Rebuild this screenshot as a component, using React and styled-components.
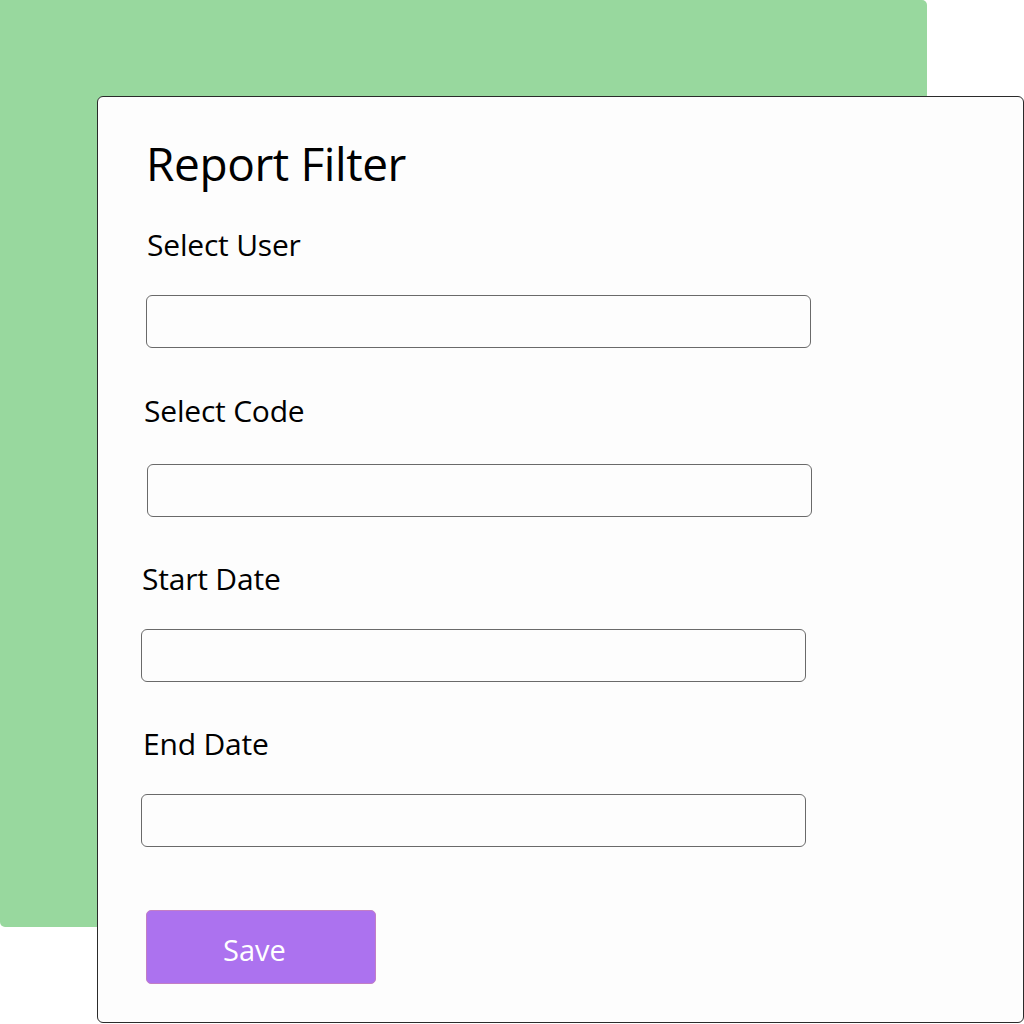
import React from "react";
import styled, { createGlobalStyle } from "styled-components";

const Global = createGlobalStyle`
  html, body { margin: 0; padding: 0; background: #ffffff; }
  body { font-family: "Open Sans", "Noto Sans", sans-serif; }
`;

const Stage = styled.div`
  width: 1024px;
  height: 1024px;
  display: grid;
  grid-template-columns: 1024px;
  grid-template-rows: 1024px;
  overflow: hidden;
`;

const Backdrop = styled.div`
  grid-area: 1 / 1;
  width: 927px;
  height: 927px;
  background: #98d89e;
  border-radius: 0 5px 5px 5px;
`;

const Card = styled.section`
  grid-area: 1 / 1;
  margin: 96px 0 0 97px;
  width: 927px;
  height: 927px;
  box-sizing: border-box;
  background: #fdfdfd;
  border: 1.5px solid #2a2a2a;
  border-radius: 6px;
  padding: 42px 0 0 0;
  display: flex;
  flex-direction: column;
  align-items: flex-start;
`;

const Title = styled.h1`
  margin: 0 0 0 48px;
  font-size: 46px;
  line-height: 48px;
  font-weight: 400;
  color: #000;
  letter-spacing: -0.4px;
`;

const Label = styled.label`
  display: block;
  margin: ${(p) => p.$top}px 0 0 ${(p) => p.$x}px;
  font-size: 30px;
  line-height: 40px;
  color: #000;
  letter-spacing: -0.2px;
`;

const Input = styled.div`
  margin: ${(p) => p.$top}px 0 0 ${(p) => p.$x}px;
  width: 665px;
  height: 53px;
  box-sizing: border-box;
  border: 1.3px solid #6a6a6a;
  border-radius: 6px;
  background: #fdfdfd;
`;

const SaveButton = styled.button`
  margin: 63px 0 0 48px;
  width: 230px;
  height: 74px;
  box-sizing: border-box;
  background: #ac72ef;
  border: 1.3px solid #c27fc4;
  border-radius: 5px;
  color: #ffffff;
  font-family: "Open Sans", "Noto Sans", sans-serif;
  font-size: 29px;
  padding: 4px 13px 0 0;
  cursor: pointer;
`;

const fields = [
  { label: "Select User", lTop: 38, lx: 49, iTop: 30, ix: 48 },
  { label: "Select Code", lTop: 43, lx: 46, iTop: 33, ix: 49 },
  { label: "Start Date", lTop: 42, lx: 44, iTop: 30, ix: 43 },
  { label: "End Date", lTop: 42, lx: 45, iTop: 30, ix: 43 },
];

export default function App() {
  return (
    <>
      <Global />
      <Stage>
        <Backdrop />
        <Card>
          <Title>Report Filter</Title>
          {fields.map((f) => (
            <React.Fragment key={f.label}>
              <Label $top={f.lTop} $x={f.lx}>{f.label}</Label>
              <Input $top={f.iTop} $x={f.ix} />
            </React.Fragment>
          ))}
          <SaveButton>Save</SaveButton>
        </Card>
      </Stage>
    </>
  );
}
